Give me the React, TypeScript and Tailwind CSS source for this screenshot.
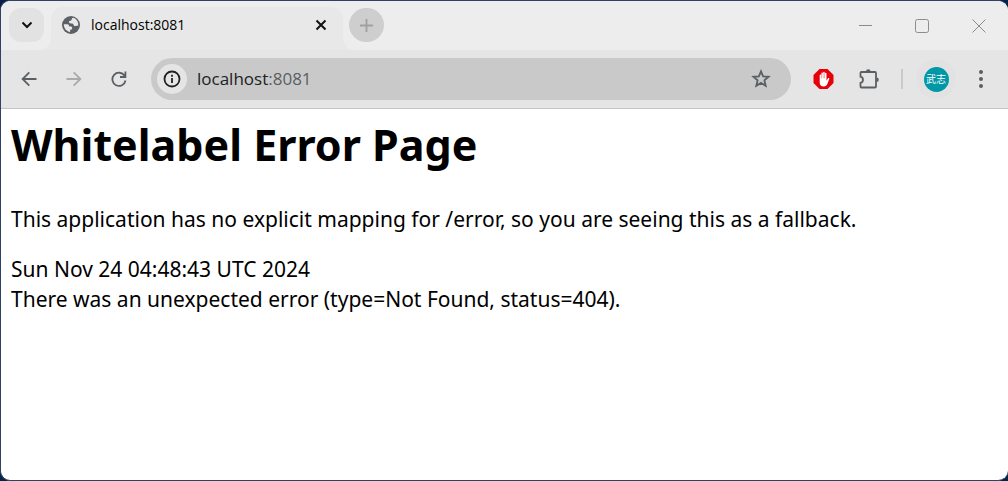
import { useState } from "react";

interface BrowserTab {
  host: string;
  port: string;
}

function GlobeIcon() {
  return (
    <svg width="20" height="20" viewBox="0 0 20 20" className="shrink-0">
      <circle cx="10" cy="10" r="9" fill="#5b6167" />
      <path
        d="M12.5 2.8c-1.2.2-1.8.8-1.8 1.7 0 1-.8 1.200-1.700 1.300-.9.1-1.200.7-1 1.500.2.9 1 1.200 2.200 1.100 1.500-.1 2.300.5 2.500 1.500.2 1.100.9 1.300 2 1.200l2.600-.5c.3-3.600-1.700-6.700-4.800-7.800z"
        fill="#e8e8e8"
      />
      <path
        d="M2.800 9.200c0 4 2.700 7.100 6.300 7.800v-2.300c1.500.1 2-.6 2.100-1.500.1-1.200-.6-1.700-1.900-1.700-.9 0-1.200-.4-1.400-1.100-.2-.8-.8-1.200-1.800-1.200z"
        fill="#e8e8e8"
      />
    </svg>
  );
}

function ChromeTabs({ title, onClose }: { title: string; onClose: () => void }) {
  return (
    <header className="flex h-[49px] bg-[#ededed] pl-2 pr-px">
      <button
        aria-label="Search tabs"
        className="mt-[7px] flex h-[34px] w-[35px] shrink-0 items-center justify-center rounded-xl bg-[#e2e2e2]"
      >
        <svg width="12" height="8" viewBox="0 0 12 8" fill="none" stroke="#111" strokeWidth="2">
          <path d="M1.500 1.500 6 6l4.500-4.500" />
        </svg>
      </button>

      {/* Active tab */}
      <div className="relative ml-[7px] mt-[6px] flex w-[292px] items-center rounded-t-xl bg-[#e8e8e8] pb-2 pl-[10px] pr-3">
        <svg className="absolute -left-3 bottom-0" width="12" height="12" fill="#e8e8e8">
          <path d="M12 0v12H0C7 12 12 7 12 0z" />
        </svg>
        <svg className="absolute -right-3 bottom-0" width="12" height="12" fill="#e8e8e8">
          <path d="M0 0v12h12C5 12 0 7 0 0z" />
        </svg>
        <GlobeIcon />
        <span className="ml-[10px] grow text-[14px] leading-5 text-black">{title}</span>
        <button aria-label="Close tab" onClick={onClose} className="flex size-5 items-center justify-center">
          <svg width="12" height="12" viewBox="0 0 12 12" stroke="#111" strokeWidth="2">
            <path d="m1.500 1.500 9 9M10.500 1.500l-9 9" />
          </svg>
        </button>
      </div>

      <button
        aria-label="New tab"
        className="ml-[6px] mt-[7px] flex h-[34px] w-[35px] shrink-0 items-center justify-center rounded-full bg-[#cecece]"
      >
        <svg width="13" height="13" viewBox="0 0 13 13" stroke="#a0a0a0" strokeWidth="1.8">
          <path d="M6.500 0v13M0 6.500h13" />
        </svg>
      </button>

      {/* Window controls */}
      <div className="ml-auto flex text-[#8c8c8c]">
        <button aria-label="Minimize" className="flex w-[57px] items-center justify-center">
          <svg width="14" height="14" stroke="currentColor">
            <path d="M1 6.500h13" />
          </svg>
        </button>
        <button aria-label="Maximize" className="flex w-[57px] items-center justify-center">
          <svg width="14" height="14" fill="none" stroke="currentColor">
            <rect x="0.500" y="0.500" width="13" height="13" rx="2" />
          </svg>
        </button>
        <button aria-label="Close" className="flex w-[57px] items-center justify-center">
          <svg width="14" height="14" stroke="currentColor">
            <path d="m0.500 0.500 13 13M13.500 0.500l-13 13" />
          </svg>
        </button>
      </div>
    </header>
  );
}

function Toolbar({ host, port }: BrowserTab) {
  return (
    <div className="flex h-[59px] items-center border-b border-[#c4c4c4] bg-[#e5e5e5] pl-[5px] pr-[6px] text-[#5a5f64]">
      <button aria-label="Back" className="flex size-[45px] items-center justify-center">
        <svg width="16" height="16" viewBox="0 0 16 16" fill="none" stroke="currentColor" strokeWidth="1.8">
          <path d="M15.500 8H2M8.300 1.300 1.600 8l6.700 6.700" />
        </svg>
      </button>
      <button aria-label="Forward" className="flex size-[45px] items-center justify-center text-[#aaaaaa]" disabled>
        <svg width="16" height="16" viewBox="0 0 16 16" fill="none" stroke="currentColor" strokeWidth="1.8">
          <path d="M.5 8H14M7.700 1.300 14.400 8l-6.700 6.700" />
        </svg>
      </button>
      <button aria-label="Reload" className="flex size-[45px] items-center justify-center">
        <svg width="16" height="16" viewBox="0 0 16 16" fill="none" stroke="currentColor" strokeWidth="1.8">
          <path d="M13.600 4.800A6.600 6.600 0 1 0 14.500 9.500M14.400.5v5.500H9" />
        </svg>
      </button>

      {/* Address bar */}
      <div className="ml-[10px] flex h-[42px] grow items-center rounded-full bg-[#c9c9c9] pl-[6px] pr-5">
        <button
          aria-label="Site information"
          className="flex size-[30px] items-center justify-center rounded-full bg-[#e5e5e5] text-[#202124]"
        >
          <svg width="18" height="18" viewBox="0 0 18 18" fill="none" stroke="currentColor" strokeWidth="1.8">
            <circle cx="9" cy="9" r="7.500" />
            <path d="M9 8v5M9 4.800v2" />
          </svg>
        </button>
        <a href="#" className="ml-[10px] grow text-[17px] leading-6 text-[#202124]">
          {host}
          <span className="text-[#5a5f64]">{port}</span>
        </a>
        <button aria-label="Bookmark this page">
          <svg width="20" height="20" viewBox="0 0 20 20" fill="none" stroke="currentColor" strokeWidth="1.8">
            <path d="m10 2.300 2.100 5.100 5.500.4-4.200 3.600 1.300 5.400L10 13.900l-4.700 2.900 1.300-5.400L2.400 7.800l5.500-.4z" />
          </svg>
        </button>
      </div>

      <button aria-label="Ad blocker" className="ml-[9px] flex size-[46px] items-center justify-center">
        <svg width="22" height="22" viewBox="0 0 22 22">
          <path d="M7.500 1h8l6 6v8l-6 6h-8l-6-6V7z" fill="#e6000a" />
          <path
            d="M7.700 12.500V7.300c0-1 1.400-1 1.400 0v3.200h.3V5.300c0-1 1.500-1 1.500 0v5h.3V4.500c0-1 1.500-1 1.500 0v5.800h.3V5.600c0-1 1.500-1 1.500 0v7.200l1.300-2.300c.6-.9 1.800-.4 1.500.5l-2 5.100c-.6 1.600-1.700 2.400-3.500 2.400-2.700 0-4.100-1.500-4.100-4z"
            fill="#fff"
          />
        </svg>
      </button>
      <button aria-label="Extensions" className="flex size-[46px] items-center justify-center">
        <svg width="22" height="22" viewBox="0 0 22 22">
          <path
            d="M3.500 4h13.500a1 1 0 0 1 1 1v13.500a1 1 0 0 1-1 1H3.500a1 1 0 0 1-1-1v-3.700c3.300-.6 3.300-5.500 0-6.100V5a1 1 0 0 1 1-1z"
            fill="none"
            stroke="currentColor"
            strokeWidth="1.8"
          />
          <path d="M8 3.500a2.300 2.300 0 0 1 4.600 0zM18.500 9.500a2.300 2.300 0 0 1 0 4.600z" fill="currentColor" />
        </svg>
      </button>
      <div className="mx-[9px] h-5 w-[2px] bg-[#cacaca]" />
      <button
        aria-label="Profile"
        className="ml-[4px] flex size-[40px] items-center justify-center rounded-full bg-[#e2e2e2]"
      >
        <span className="flex size-[25px] items-center justify-center rounded-full bg-[#0097a7] text-[10px] leading-none text-white">
          武志
        </span>
      </button>
      <button aria-label="Menu" className="ml-[3px] flex h-[45px] w-[43px] items-center justify-center">
        <svg width="4" height="18" viewBox="0 0 4 18" fill="currentColor">
          <circle cx="2" cy="2" r="2" />
          <circle cx="2" cy="9" r="2" />
          <circle cx="2" cy="16" r="2" />
        </svg>
      </button>
    </div>
  );
}

export default function App() {
  const [tab, setTab] = useState<BrowserTab>({ host: "localhost", port: ":8081" });

  return (
    <div className="flex min-h-screen bg-[#0a2147] font-['Open_Sans','Noto_Sans_CJK_JP',sans-serif]">
      <div className="flex grow flex-col overflow-hidden rounded-[10px] border-y border-l border-[#2f4164] bg-white">
        <ChromeTabs title={tab.host + tab.port} onClose={() => setTab({ host: "", port: "" })} />
        <Toolbar host={tab.host} port={tab.port} />
        <main className="px-[10px] font-['Noto_Sans',sans-serif] text-[21px] leading-[30px] text-black">
          <h1 className="mt-[6px] text-[43px] font-bold leading-[60px]">Whitelabel Error Page</h1>
          <p className="mt-[29px]">
            This application has no explicit mapping for /error, so you are seeing this as a fallback.
          </p>
          <div className="mt-5">Sun Nov 24 04:48:43 UTC 2024</div>
          <div>There was an unexpected error (type=Not Found, status=404).</div>
        </main>
      </div>
    </div>
  );
}
